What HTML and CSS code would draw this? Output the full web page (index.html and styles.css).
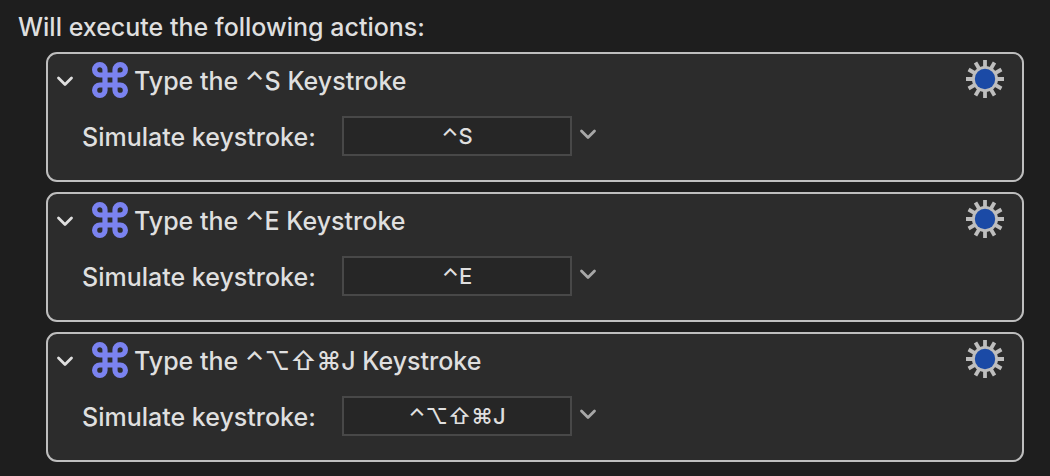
FILE: index.html
```
<!DOCTYPE html>
<html lang="en">
<head>
    <meta charset="UTF-8">
    <meta name="viewport" content="width=device-width, initial-scale=1.0">
    <title>Macro Actions</title>
    <link rel="stylesheet" href="styles.css">
</head>
<body>
    <!-- Shared icons -->
    <svg class="sprite" aria-hidden="true">
        <symbol id="icon-chevron" viewBox="0 0 18 12">
            <path d="M2.5 3 L9 9.4 L15.5 3" fill="none" stroke="currentColor" stroke-width="2.8" stroke-linecap="round" stroke-linejoin="round"/>
        </symbol>
        <symbol id="icon-command" viewBox="0 0 36 36">
            <path d="M13 13 H7.8 A5.2 5.2 0 1 1 13 7.8 V28.2 A5.2 5.2 0 1 1 7.8 23 H28.2 A5.2 5.2 0 1 1 23 28.2 V7.8 A5.2 5.2 0 1 1 28.2 13 Z" fill="none" stroke="currentColor" stroke-width="5.2" stroke-linejoin="round"/>
        </symbol>
        <symbol id="icon-gear" viewBox="-19 -19 38 38">
            <g stroke="#bebebe" stroke-width="3.8">
                <path d="M0 -19 V19"/>
                <path d="M0 -19 V19" transform="rotate(30)"/>
                <path d="M0 -19 V19" transform="rotate(60)"/>
                <path d="M0 -19 V19" transform="rotate(90)"/>
                <path d="M0 -19 V19" transform="rotate(120)"/>
                <path d="M0 -19 V19" transform="rotate(150)"/>
            </g>
            <circle r="13" fill="#bebebe"/>
            <circle r="10.2" fill="#1b4aa6"/>
        </symbol>
    </svg>

    <main class="actions">
        <h1 class="actions-title">Will execute the following actions:</h1>

        <section class="action">
            <header class="action-header">
                <button class="toggle" type="button" aria-label="Collapse action"><svg><use href="#icon-chevron"/></svg></button>
                <svg class="action-icon"><use href="#icon-command"/></svg>
                <h2 class="action-name">Type the ⌃S Keystroke</h2>
                <button class="gear" type="button" aria-label="Action options"><svg><use href="#icon-gear"/></svg></button>
            </header>
            <div class="action-row">
                <label for="key1">Simulate keystroke:</label>
                <input id="key1" type="text" value="⌃S">
                <button class="menu" type="button" aria-label="Keystroke options"><svg><use href="#icon-chevron"/></svg></button>
            </div>
        </section>

        <section class="action">
            <header class="action-header">
                <button class="toggle" type="button" aria-label="Collapse action"><svg><use href="#icon-chevron"/></svg></button>
                <svg class="action-icon"><use href="#icon-command"/></svg>
                <h2 class="action-name">Type the ⌃E Keystroke</h2>
                <button class="gear" type="button" aria-label="Action options"><svg><use href="#icon-gear"/></svg></button>
            </header>
            <div class="action-row">
                <label for="key2">Simulate keystroke:</label>
                <input id="key2" type="text" value="⌃E">
                <button class="menu" type="button" aria-label="Keystroke options"><svg><use href="#icon-chevron"/></svg></button>
            </div>
        </section>

        <section class="action">
            <header class="action-header">
                <button class="toggle" type="button" aria-label="Collapse action"><svg><use href="#icon-chevron"/></svg></button>
                <svg class="action-icon"><use href="#icon-command"/></svg>
                <h2 class="action-name">Type the ⌃⌥⇧⌘J Keystroke</h2>
                <button class="gear" type="button" aria-label="Action options"><svg><use href="#icon-gear"/></svg></button>
            </header>
            <div class="action-row">
                <label for="key3">Simulate keystroke:</label>
                <input id="key3" type="text" value="⌃⌥⇧⌘J">
                <button class="menu" type="button" aria-label="Keystroke options"><svg><use href="#icon-chevron"/></svg></button>
            </div>
        </section>
    </main>
</body>
</html>
```

FILE: styles.css
```
* {
    margin: 0;
    padding: 0;
    box-sizing: border-box;
}

body {
    background-color: #1e1e1e;
    color: #dfdfdf;
    font-family: Inter, "Liberation Sans", sans-serif;
    font-size: 25px;
    font-weight: 480;
    line-height: 32px;
}

.sprite {
    position: absolute;
    width: 0;
    height: 0;
}

.actions {
    display: flex;
    flex-direction: column;
    gap: 10px;
    padding: 10px 26px 14px 46px;
}

.actions-title {
    margin-left: -28px;
    padding-top: 1px;
    margin-bottom: -1px;
    font-size: 25px;
    font-weight: inherit;
}

.action {
    padding: 0 18px 24px 8px;
    background-color: #2c2c2c;
    border: 2px solid #bebebe;
    border-radius: 11px;
}

.action-header {
    display: flex;
    align-items: center;
    height: 52px;
}

.action-name {
    flex: 1;
    margin-left: 6px;
    padding-top: 2px;
    font-size: 25px;
    font-weight: inherit;
}

button {
    display: flex;
    background: none;
    border: none;
    color: inherit;
    cursor: pointer;
}

.toggle {
    padding-top: 2px;
}

.toggle svg,
.menu svg {
    width: 18px;
    height: 12px;
}

.action-icon {
    width: 36px;
    height: 36px;
    margin-left: 18px;
    color: #7b83f0;
}

.gear {
    padding-bottom: 2px;
}

.gear svg {
    width: 38px;
    height: 38px;
}

.action-row {
    display: flex;
    align-items: center;
    margin-top: 10px;
    padding-left: 26px;
}

.action-row label {
    width: 260px;
    padding-top: 2px;
}

.action-row input {
    width: 230px;
    height: 40px;
    background-color: #262626;
    border: 2px solid #484848;
    color: #dfdfdf;
    font-family: inherit;
    font-size: 22px;
    font-weight: inherit;
    text-align: center;
}

.menu {
    margin-left: 7px;
    padding-bottom: 4px;
    color: #a8a8a8;
}
```
